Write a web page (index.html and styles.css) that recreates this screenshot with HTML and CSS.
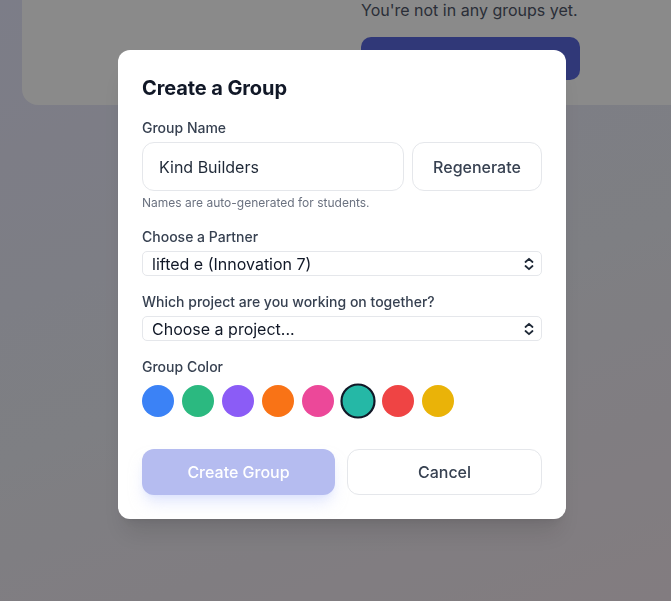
FILE: index.html
```html
<!DOCTYPE html>
<html lang="en">
<head>
<meta charset="utf-8">
<title>Create a Group</title>
<link rel="stylesheet" href="styles.css">
</head>
<body>
<div class="page">
  <div class="card">
    <div class="empty">
      <p class="empty-text">You're not in any groups yet.</p>
      <div class="empty-btn"></div>
    </div>
  </div>
</div>

<div class="overlay">
  <div class="modal">
    <h2 class="title">Create a Group</h2>

    <div class="field first">
      <label class="label">Group Name</label>
      <div class="name-row">
        <div class="input">Kind Builders</div>
        <button class="btn-secondary regen">Regenerate</button>
      </div>
      <p class="hint">Names are auto-generated for students.</p>
    </div>

    <div class="field">
      <label class="label">Choose a Partner</label>
      <div class="select">
        <span class="select-text">lifted e (Innovation 7)</span>
        <svg class="chev" width="10" height="14" viewBox="0 0 10 14" fill="none" stroke="#1f2937" stroke-width="1.8" stroke-linecap="round" stroke-linejoin="round"><path d="M1.5 5 L5 1.8 L8.5 5"/><path d="M1.5 9 L5 12.2 L8.5 9"/></svg>
      </div>
    </div>

    <div class="field">
      <label class="label">Which project are you working on together?</label>
      <div class="select">
        <span class="select-text">Choose a project...</span>
        <svg class="chev" width="10" height="14" viewBox="0 0 10 14" fill="none" stroke="#1f2937" stroke-width="1.8" stroke-linecap="round" stroke-linejoin="round"><path d="M1.5 5 L5 1.8 L8.5 5"/><path d="M1.5 9 L5 12.2 L8.5 9"/></svg>
      </div>
    </div>

    <div class="field">
      <label class="label">Group Color</label>
      <div class="colors">
        <span class="dot c-blue"></span>
        <span class="dot c-green"></span>
        <span class="dot c-purple"></span>
        <span class="dot c-orange"></span>
        <span class="dot c-pink"></span>
        <span class="dot c-teal selected"></span>
        <span class="dot c-red"></span>
        <span class="dot c-yellow"></span>
      </div>
    </div>

    <div class="actions">
      <button class="btn-primary">Create Group</button>
      <button class="btn-secondary cancel">Cancel</button>
    </div>
  </div>
</div>
</body>
</html>
```

FILE: styles.css
```css
* { box-sizing: border-box; }

html, body {
  margin: 0;
  padding: 0;
  height: 100%;
  overflow: hidden;
}

body {
  font-family: Inter, "Liberation Sans", sans-serif;
  background: linear-gradient(160deg, #e6e7fb 0%, #e9eaf2 55%, #f1e6ec 100%);
  color: #111827;
}

.page {
  padding-left: 22px;
}

.card {
  margin-top: -40px;
  height: 145px;
  width: 700px;
  background: #ffffff;
  border-radius: 16px;
  padding-left: 339px;
  padding-top: 38px;
}

.empty {
  width: 219px;
}

.empty-text {
  margin: 0;
  font-size: 16px;
  line-height: 24px;
  color: #4f5668;
}

.empty-btn {
  margin-top: 15px;
  height: 43px;
  border-radius: 10px;
  background: #5a68de;
}

.overlay {
  position: fixed;
  inset: 0;
  background: rgba(0, 0, 0, 0.46);
  display: flex;
  align-items: flex-start;
  padding-top: 50px;
  padding-left: 118px;
}

.modal {
  width: 448px;
  background: #ffffff;
  border-radius: 12px;
  padding: 24px;
  box-shadow: 0 20px 25px -5px rgba(0,0,0,0.1), 0 8px 10px -6px rgba(0,0,0,0.1);
}

.title {
  margin: 0;
  font-size: 20px;
  line-height: 28px;
  font-weight: 700;
  color: #111827;
  letter-spacing: -0.1px;
}

.field {
  margin-top: 16px;
}

.label {
  display: block;
  font-size: 14px;
  line-height: 20px;
  font-weight: 500;
  color: #374151;
  margin-bottom: 4px;
}

.name-row {
  display: flex;
  gap: 8px;
}

.input {
  flex: 1;
  height: 49px;
  border: 1px solid #e5e7eb;
  border-radius: 12px;
  padding: 0 16px;
  display: flex;
  align-items: center;
  font-size: 16px;
  color: #1f2937;
}

.btn-secondary {
  font-family: inherit;
  background: #ffffff;
  border: 1px solid #e5e7eb;
  color: #374151;
  font-size: 16px;
  font-weight: 500;
  border-radius: 12px;
  cursor: pointer;
}

.regen {
  width: 130px;
  height: 49px;
  padding: 0;
}

.hint {
  margin: 4px 0 1px;
  font-size: 12px;
  line-height: 16px;
  color: #6b7280;
}

.select {
  position: relative;
  height: 25px;
  border: 1px solid #e5e7eb;
  border-radius: 5px;
  display: flex;
  align-items: center;
  padding-left: 9px;
  font-size: 16px;
  color: #111827;
}

.chev {
  position: absolute;
  right: 7px;
  top: 5px;
}

.colors {
  display: flex;
  gap: 8px;
  margin-top: 8px;
}

.dot {
  width: 32px;
  height: 32px;
  border-radius: 50%;
  display: block;
}

.dot.selected {
  border: 2px solid #111827;
  transform: scale(1.1);
}

.c-blue { background: #3b82f6; }
.c-green { background: #2bb980; }
.c-purple { background: #8b5cf6; }
.c-orange { background: #f97316; }
.c-pink { background: #ec4899; }
.c-teal { background: #25b8a6; }
.c-red { background: #ef4444; }
.c-yellow { background: #eab308; }

.actions {
  display: flex;
  gap: 12px;
  margin-top: 32px;
}

.btn-primary {
  flex: 1;
  height: 46px;
  font-family: inherit;
  font-size: 16px;
  font-weight: 500;
  color: #ffffff;
  background: #b5bcf0;
  border: none;
  border-radius: 12px;
  box-shadow: 0 10px 15px -3px rgba(199, 210, 254, 0.5), 0 4px 6px -4px rgba(199, 210, 254, 0.5);
}

.cancel {
  flex: 1;
  height: 46px;
}
```
